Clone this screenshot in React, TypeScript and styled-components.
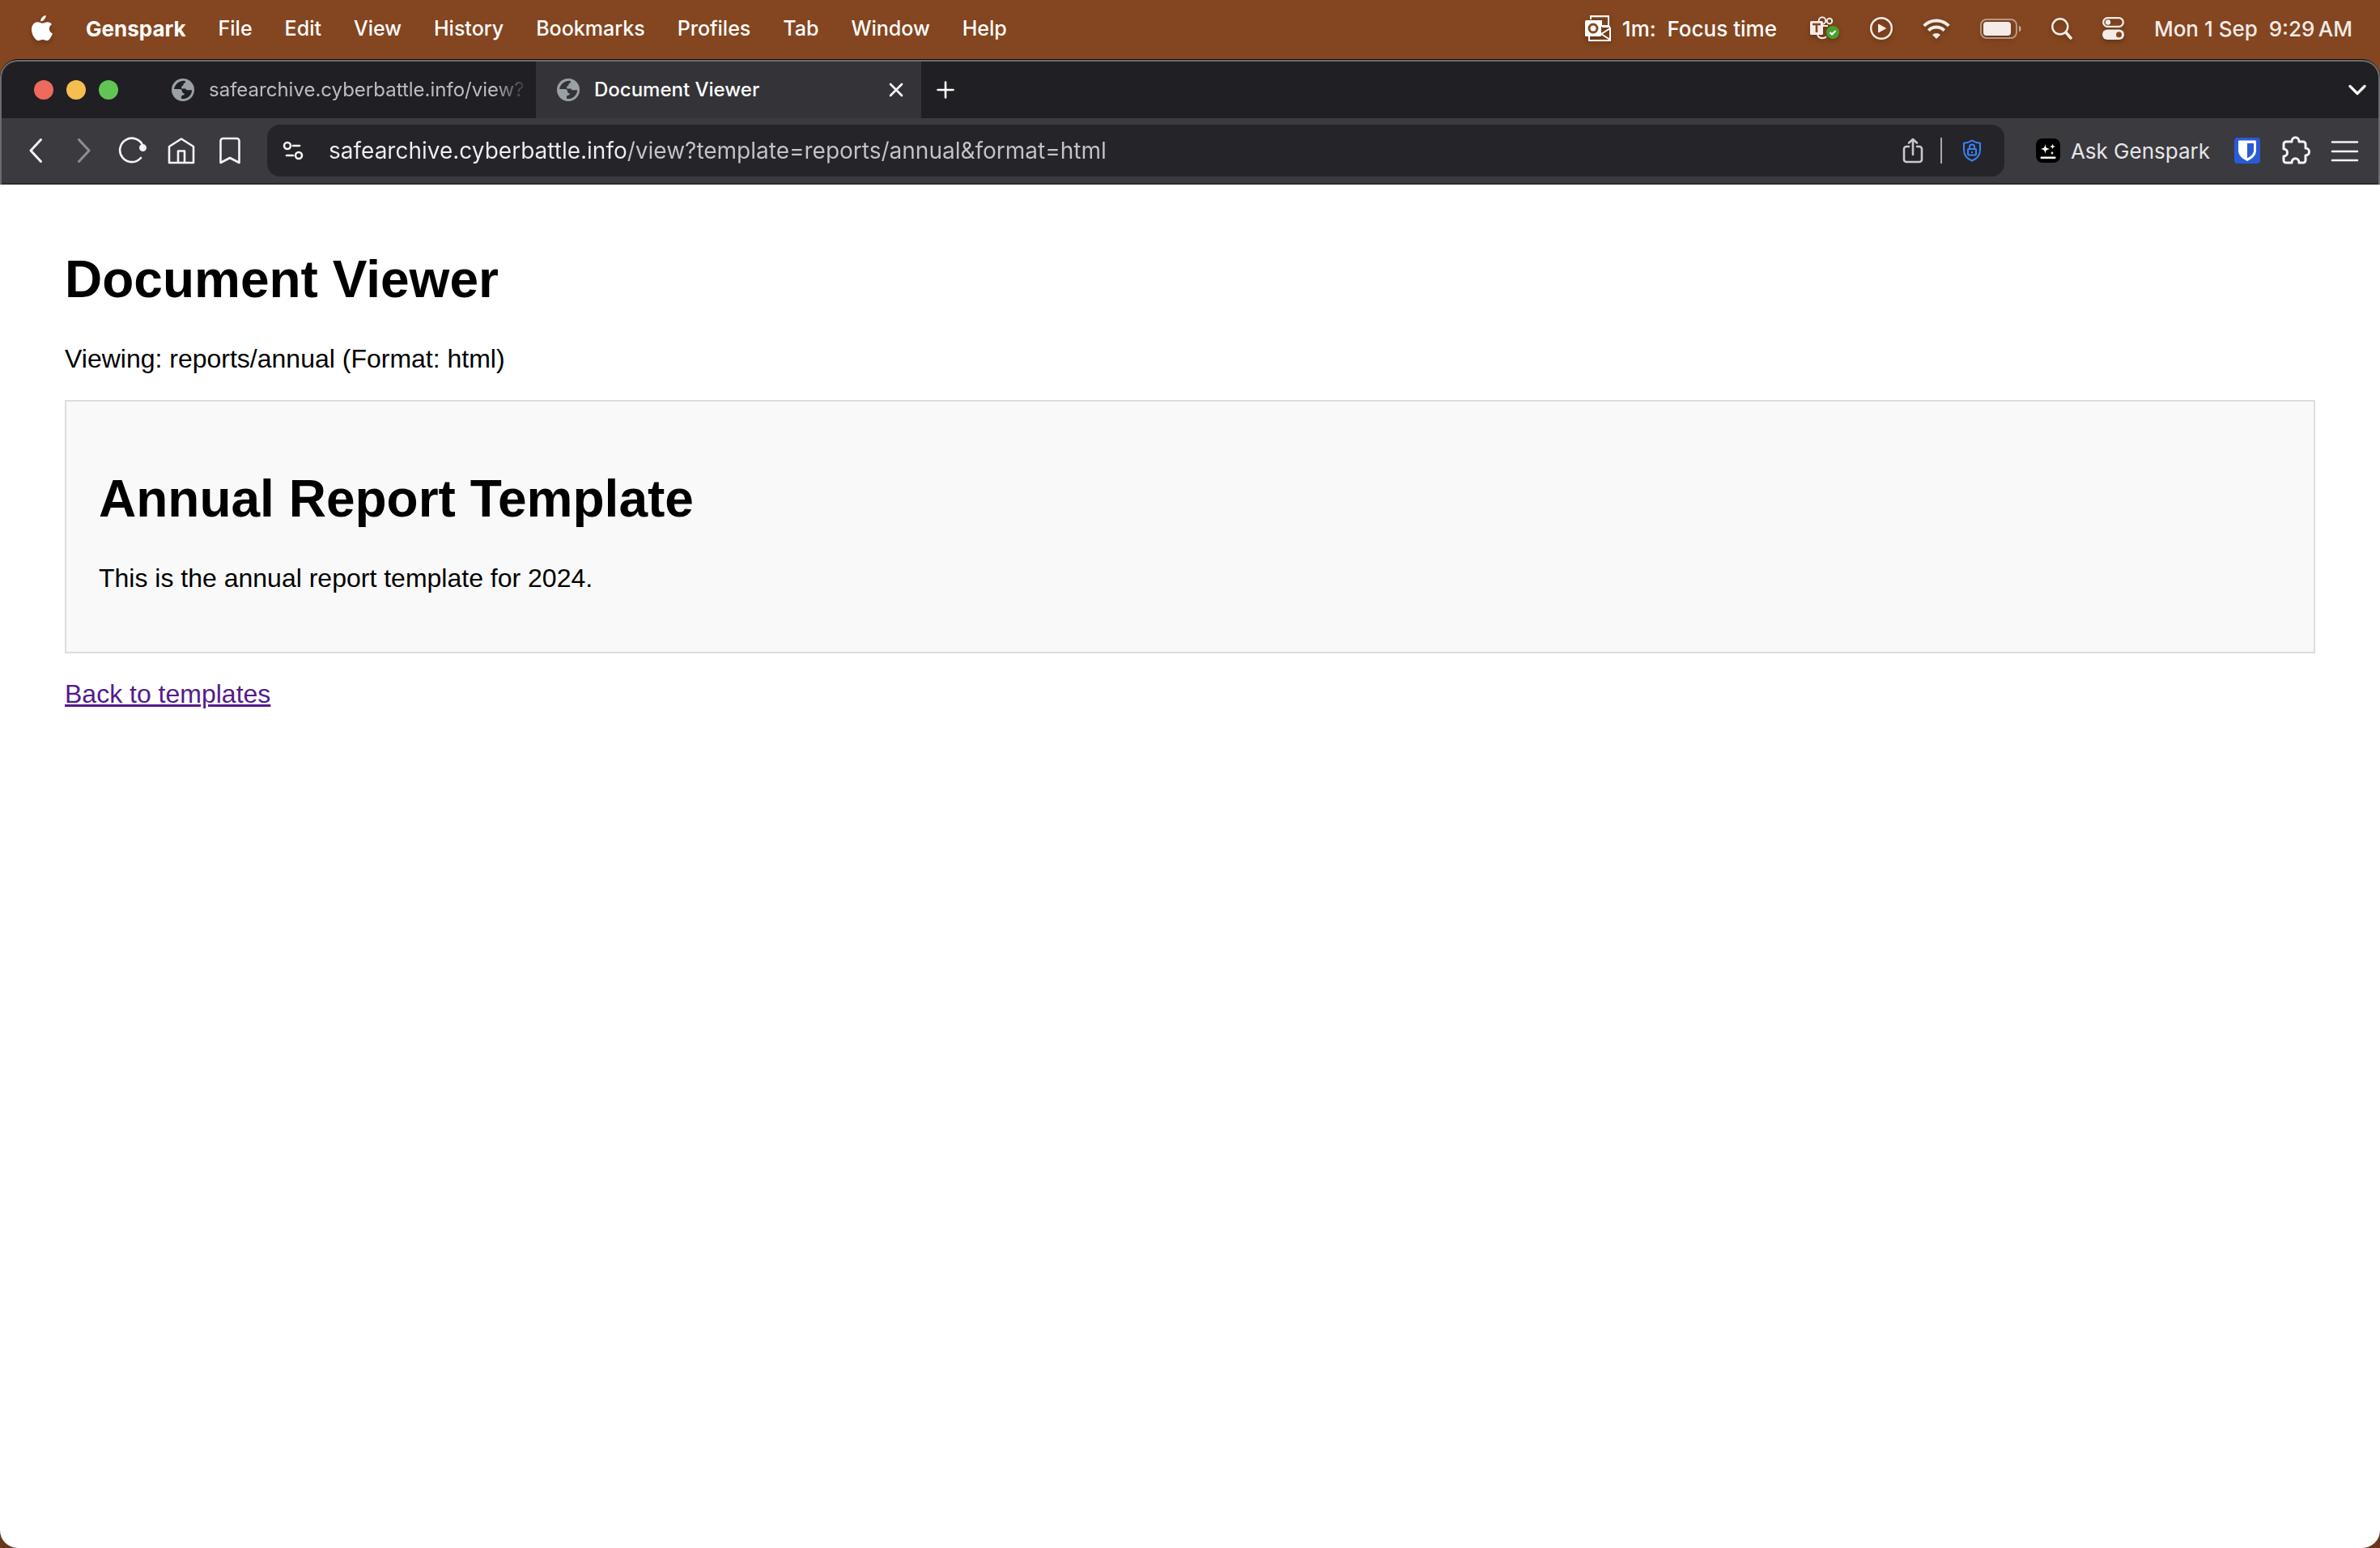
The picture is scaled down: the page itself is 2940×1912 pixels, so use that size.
import React from 'react';
import styled, { createGlobalStyle, css } from 'styled-components';

const ui = `Inter, "Liberation Sans", sans-serif`;

const Global = createGlobalStyle`
  * { box-sizing: border-box; }
  body { margin: 0; background: #6b3519; font-family: ${ui}; }
  button { padding: 0; border: 0; background: none; color: inherit; font: inherit; display: flex; align-items: center; }
  svg { display: block; flex: none; }
`;

const Desktop = styled.div`
  min-height: 100vh;
  display: flex;
  flex-direction: column;
  background: linear-gradient(#844620 120px, #6b3519 100%);
`;

const MenuBar = styled.header`
  height: 73px;
  display: flex;
  align-items: center;
  justify-content: space-between;
  padding: 0 34px 3px 38px;
  color: #fff;
  font-size: 25px;
  font-weight: 500;
  background: #844620;
  text-shadow: 0 3px 6px rgba(0, 0, 0, 0.35);
  svg { filter: drop-shadow(0 3px 3px rgba(0, 0, 0, 0.25)); }
`;

const Menus = styled.nav`
  display: flex;
  align-items: center;
  gap: 40px;
`;

const MenuItem = styled.button<{ $strong?: boolean }>`
  && {
    font-size: ${p => (p.$strong ? 26 : 25)}px;
    font-weight: ${p => (p.$strong ? 700 : 500)};
  }
`;

const Status = styled.div`
  display: flex;
  align-items: center;
  gap: 37px;
  font-size: 26px;
`;

const StatusButton = styled.button<{ $bright?: boolean }>`
  && {
    gap: 14px;
    margin-right: ${p => (p.$bright ? 4 : 0)}px;
    white-space: pre;
    color: ${p => (p.$bright ? '#fff' : '#f3ece8')};
  }
`;

const Window = styled.section`
  flex: 1;
  display: flex;
  flex-direction: column;
  border: 1px solid #0c0c0e;
  border-width: 1px 0 0;
  border-radius: 22px;
  overflow: hidden;
  background: #6b6c70;
`;

const Chrome = styled.div`
  margin: 2px 2px 0;
  border-radius: 20px 20px 0 0;
  overflow: hidden;
  background: #201f24;
`;

const TabStrip = styled.div`
  height: 70px;
  display: flex;
  align-items: stretch;
  color: #fff;
`;

const Lights = styled.div`
  display: flex;
  align-items: center;
  gap: 16px;
  padding: 0 54px 0 40px;
`;

const Light = styled.button<{ $color: string }>`
  && { width: 24px; height: 24px; border-radius: 50%; background: ${p => p.$color}; }
`;

const Tab = styled.div<{ $active?: boolean }>`
  width: ${p => (p.$active ? 476 : 462)}px;
  display: flex;
  align-items: center;
  gap: 18px;
  padding: 0 22px 0 26px;
  color: #fff;
  background: #343338;
  ${p => !p.$active && css`
    padding: 0 4px 0 12px;
    color: #bdbdbf;
    background: transparent;
  `}
`;

const TabTitle = styled.button<{ $fade?: boolean }>`
  && {
    flex: 1;
    min-width: 0;
    white-space: nowrap;
    font-size: 24px;
    font-weight: ${p => (p.$fade ? 400 : 500)};
    line-height: 32px;
    ${p => p.$fade && css`mask-image: linear-gradient(90deg, #000 88%, transparent 99%);`}
  }
`;

const NewTab = styled.button`
  && { padding: 0 19px; }
`;

const TabMenu = styled.button`
  && { margin-left: auto; padding: 0 15px; }
`;

const Toolbar = styled.div`
  height: 82px;
  display: flex;
  align-items: center;
  padding: 0 24px;
  color: #f4f4f6;
  background: #3b3a3f;
  border-bottom: 2px solid #2b2a2f;
`;

const NavButtons = styled.div`
  display: flex;
  gap: 24px;
  margin-right: 28px;
`;

const IconButton = styled.button<{ $dim?: boolean }>`
  && { width: 36px; height: 36px; justify-content: center; opacity: ${p => (p.$dim ? 0.45 : 1)}; }
`;

const AddressBar = styled.div`
  flex: 1;
  height: 64px;
  display: flex;
  align-items: center;
  padding: 0 24px 0 18px;
  border-radius: 16px;
  background: #252429;
`;

const Address = styled.input`
  flex: 1;
  min-width: 0;
  margin: 0 24px 0 30px;
  padding: 0;
  border: 0;
  outline: 0;
  font-family: ${ui};
  font-size: 28px;
  line-height: 36px;
  color: transparent;
  background: linear-gradient(90deg, #f0eff4 367px, #c4c4c9 367px);
  background-clip: text;
`;

const AddressActions = styled.div`
  display: flex;
  align-items: center;
  gap: 21px;
`;

const Divider = styled.span`
  width: 2px;
  height: 32px;
  background: #a9a9ab;
`;

const Ask = styled.button`
  && {
    gap: 12px;
    margin: 0 28px 0 38px;
    font-size: 26px;
    color: #e6e5ea;
    white-space: nowrap;
  }
`;

const Extensions = styled.div`
  display: flex;
  align-items: center;
  gap: 24px;
`;

const Page = styled.main`
  flex: 1;
  padding: 37px 80px 0;
  background: #fff;
  color: #000;
  font-family: "Liberation Sans", Arial, sans-serif;
  font-size: 32px;
  line-height: 38px;
`;

const Heading = styled.h1`
  margin: 42px 0 41px;
  font-size: 64px;
  line-height: 76px;
`;

const Text = styled.p`
  margin: 0 0 32px;
`;

const Report = styled.article`
  display: flow-root;
  margin-bottom: 31px;
  padding: 40px;
  padding-top: 40px;
  border: 2px solid #ddd;
  background: #f9f9f9;

  ${Heading} { margin-top: 42px; }
  ${Text} { margin-bottom: 32px; }
  padding-block: 40px;
`;

const BackLink = styled.a`
  color: #551a8b;
  text-decoration: underline;
`;

const Globe = ({ hole }: { hole: string }) => (
  <svg width="28" height="28" viewBox="0 0 28 28">
    <circle cx="14" cy="14" r="14" fill="#9aa0a6" />
    <path fill={hole} d="M15 2.800C10 3 4.500 6 3 13h6.500c2.500 0 3.500 1.200 3.500 3 0 1.500.8 2 2.500 2v2.200c-2 0-3.200.8-3.500 2.300-.2 1.200 0 2 .5 2.600C19 25.500 25 21 25.200 14.200h-5.700c-1.200 0-2-.8-2-1.800h-5.300V9.500c1.400 0 2.200-.8 2.300-2.200.1-1.300.9-1.900 2.300-1.900V3z" />
  </svg>
);

const line = { fill: 'none', stroke: 'currentColor', strokeWidth: 2.6, strokeLinecap: 'round', strokeLinejoin: 'round' } as const;

const Apple = () => (
  <svg width="28" height="32" viewBox="0 0 28 32" fill="#fff">
    <path d="M18.7 0c.2 3.900-3 7.300-6.400 7.300C11.900 3.700 15.100.4 18.700 0zM26 11c-4.600 2.900-3.900 9.500.9 11.500-1.200 3.500-4 8.800-7.100 8.800-2 0-2.800-1.200-5.100-1.200-2.400 0-3.300 1.200-5.200 1.200C5.900 31.300 1 23.900 1 17.500 1 11.500 4.900 8.300 8.600 8.300c2.500 0 4.200 1.400 5.800 1.400 1.500 0 3.600-1.500 6.400-1.500 1.700 0 4 .9 5.200 2.800z" />
  </svg>
);

export default function App() {
  return (
    <Desktop>
      <Global />
      <MenuBar>
        <Menus>
          <MenuItem aria-label="Apple menu"><Apple /></MenuItem>
          <MenuItem $strong>Genspark</MenuItem>
          {['File', 'Edit', 'View', 'History', 'Bookmarks', 'Profiles', 'Tab', 'Window', 'Help'].map(m => (
            <MenuItem key={m}>{m}</MenuItem>
          ))}
        </Menus>
        <Status>
          <StatusButton $bright>
            <svg width="32" height="32" viewBox="0 0 32 32">
              <path d="M7 5V1h22v13M5 26v5h26V15M31 16 20 23l11 7M21 14h10" fill="none" stroke="#fff" strokeWidth="2" />
              <path d="M7 1h22" stroke="#fff" strokeWidth="2.5" />
              <path d="M20 6v8M20 13h9" stroke="#fff" strokeWidth="2" />
              <rect x="0" y="6" width="20" height="20" rx="1.5" fill="#fff" />
              <circle cx="10" cy="16" r="5" fill="none" stroke="#844620" strokeWidth="3" />
            </svg>
            {'1m:  Focus time'}
          </StatusButton>
          <StatusButton aria-label="Teams">
            <svg width="37" height="30" viewBox="0 0 37 30">
              <g fill="none" stroke="#f3ece8" strokeWidth="2">
                <circle cx="15" cy="5.5" r="4.2" /><circle cx="24" cy="6" r="3.2" />
                <path d="M16 12h6M9 22c1 4 4 5.500 7 5 2 0 3-1 4-1.500" />
              </g>
              <rect x="0" y="6" width="16" height="17" rx="1.5" fill="#f3ece8" />
              <path d="M3 10h10M8 10v10" stroke="#844620" strokeWidth="2.6" />
              <circle cx="28" cy="20" r="8" fill="#4a9f2e" />
              <path d="m24.500 20 2.500 2.500 4.500-4.500" fill="none" stroke="#fff" strokeWidth="2" />
            </svg>
          </StatusButton>
          <StatusButton aria-label="Play">
            <svg width="28" height="28" viewBox="0 0 28 28">
              <circle cx="14" cy="14" r="12.8" fill="none" stroke="#f3ece8" strokeWidth="2.4" />
              <path d="M10.500 9v10l9-5z" fill="#f3ece8" stroke="#f3ece8" strokeLinejoin="round" />
            </svg>
          </StatusButton>
          <StatusButton aria-label="Wi-Fi">
            <svg width="34" height="25" viewBox="0 0 34 25">
              <path d="M1.700 8.800a21.800 21.800 0 0 1 30.600 0M7.300 14.600a13.800 13.800 0 0 1 19.400 0" fill="none" stroke="#f3ece8" strokeWidth="4" />
              <path d="m17 25-5-5a7.200 7.200 0 0 1 10 0z" fill="#f3ece8" />
            </svg>
          </StatusButton>
          <StatusButton aria-label="Battery">
            <svg width="51" height="25" viewBox="0 0 51 25">
              <rect x="1" y="1" width="44" height="23" rx="7" fill="none" stroke="#f3ece8" strokeOpacity=".5" strokeWidth="2" />
              <rect x="4" y="4" width="34" height="17" rx="4" fill="#f3ece8" />
              <path d="M48 8.500c3.500 1.500 3.500 6.500 0 8z" fill="#f3ece8" fillOpacity=".6" />
            </svg>
          </StatusButton>
          <StatusButton aria-label="Spotlight">
            <svg width="26" height="27" viewBox="0 0 26 27" fill="none" stroke="#f3ece8" strokeLinecap="round">
              <circle cx="10.8" cy="10.8" r="9.5" strokeWidth="2.5" />
              <path d="m18 18 6 7" strokeWidth="3.5" />
            </svg>
          </StatusButton>
          <StatusButton aria-label="Control Centre">
            <svg width="27" height="28" viewBox="0 0 27 28">
              <rect x="1.2" y="1.2" width="24.6" height="10.6" rx="5.3" fill="none" stroke="#f3ece8" strokeWidth="2.3" />
              <circle cx="7" cy="6.5" r="3.2" fill="#f3ece8" />
              <rect x="0" y="15.5" width="27" height="12.5" rx="6.2" fill="#f3ece8" />
              <circle cx="20.5" cy="21.7" r="3.5" fill="#844620" />
            </svg>
          </StatusButton>
          <StatusButton>{'Mon 1 Sep  9:29\u2009AM'}</StatusButton>
        </Status>
      </MenuBar>
      <Window>
        <Chrome>
          <TabStrip>
            <Lights>
              <Light $color="#ec6a5e" aria-label="Close window" />
              <Light $color="#f4bf4f" aria-label="Minimise window" />
              <Light $color="#61c554" aria-label="Zoom window" />
            </Lights>
            <Tab>
              <Globe hole="#201f24" />
              <TabTitle $fade>safearchive.cyberbattle.info/view?</TabTitle>
            </Tab>
            <Tab $active>
              <Globe hole="#343338" />
              <TabTitle>Document Viewer</TabTitle>
              <button aria-label="Close tab">
                <svg width="18" height="18" viewBox="0 0 18 18" {...line}><path d="m2 2 14 14M16 2 2 16" /></svg>
              </button>
            </Tab>
            <NewTab aria-label="New tab">
              <svg width="22" height="22" viewBox="0 0 22 22" {...line}><path d="M11 1.500v19M1.500 11h19" /></svg>
            </NewTab>
            <TabMenu aria-label="Search tabs">
              <svg width="22" height="14" viewBox="0 0 22 14" {...line} strokeWidth="3.2"><path d="m2 2.500 9 9 9-9" /></svg>
            </TabMenu>
          </TabStrip>
          <Toolbar>
            <NavButtons>
              <IconButton aria-label="Back">
                <svg width="36" height="36" viewBox="0 0 36 36" {...line} strokeWidth="3"><path d="M24.500 4.500 12 18l12.500 13.500" /></svg>
              </IconButton>
              <IconButton $dim aria-label="Forward">
                <svg width="36" height="36" viewBox="0 0 36 36" {...line} strokeWidth="3"><path d="M11.500 4.500 24 18 11.500 31.500" /></svg>
              </IconButton>
              <IconButton aria-label="Reload">
                <svg width="36" height="36" viewBox="0 0 36 36" {...line}>
                  <path d="M30.500 12A14.700 14.700 0 1 0 28 27" />
                  <circle cx="30.5" cy="14.5" r="3.2" fill="currentColor" />
                </svg>
              </IconButton>
              <IconButton aria-label="Home">
                <svg width="36" height="36" viewBox="0 0 36 36" {...line}>
                  <path d="M3 13 18 3.500 33 13v20H3zM14 33V18.500h8V33" />
                </svg>
              </IconButton>
              <IconButton aria-label="Bookmark">
                <svg width="36" height="36" viewBox="0 0 36 36" {...line}>
                  <path d="M6.500 33V6a3 3 0 0 1 3-3h17a3 3 0 0 1 3 3v27L18 27z" />
                </svg>
              </IconButton>
            </NavButtons>
            <AddressBar>
              <button aria-label="Site settings">
                <svg width="28" height="28" viewBox="0 0 28 28" {...line}>
                  <circle cx="7" cy="8" r="4" /><path d="M14 8h8" /><circle cx="21" cy="20" r="4" /><path d="M6 20h8" />
                </svg>
              </button>
              <Address
                type="text"
                aria-label="Address"
                defaultValue="safearchive.cyberbattle.info/view?template=reports/annual&format=html"
              />
              <AddressActions>
                <button aria-label="Share">
                  <svg width="26" height="32" viewBox="0 0 26 32" {...line} stroke="#c9c8cd">
                    <path d="M8 11H5a3 3 0 0 0-3 3v13a3 3 0 0 0 3 3h16a3 3 0 0 0 3-3V14a3 3 0 0 0-3-3h-3M13 21V2M8 6.500 13 2l5 4.500" />
                  </svg>
                </button>
                <Divider />
                <button aria-label="Shield">
                  <svg width="32" height="28" viewBox="0 0 32 28" fill="none" stroke="#3b82f6" strokeWidth="2" strokeLinejoin="round">
                    <path d="M16 1.500c3 2 6.500 3 10 3.300V13c0 6.500-3.500 11-10 13.500C9.500 24 6 19.500 6 13V4.800c3.500-.3 7-1.300 10-3.300z" />
                    <rect x="11" y="12" width="10" height="7.5" rx="1" />
                    <path d="M13 12V9.500a3 3 0 0 1 6 0V12M16 15v2" />
                  </svg>
                </button>
              </AddressActions>
            </AddressBar>
            <Ask>
              <svg width="32" height="32" viewBox="0 0 32 32">
                <rect x="1" y="1" width="30" height="30" rx="8" fill="#000" />
                <g fill="#fff">
                  <path d="M12.500 8c.8 4.500 1.500 5.200 6 6-4.500.8-5.200 1.500-6 6-.8-4.500-1.500-5.200-6-6 4.500-.8 5.200-1.500 6-6zM21.500 7.500c.4 2.500.9 3 3.500 3.500-2.600.5-3.100 1-3.500 3.500-.4-2.500-.9-3-3.500-3.500 2.600-.5 3.100-1 3.500-3.500zM21 16.500c.3 1.700.8 2.200 2.500 2.500-1.700.3-2.200.8-2.500 2.500-.3-1.700-.8-2.200-2.500-2.500 1.700-.3 2.200-.8 2.500-2.500z" />
                  <rect x="6.5" y="23.5" width="19" height="2.5" rx="1" />
                </g>
              </svg>
              Ask Genspark
            </Ask>
            <Extensions>
              <button aria-label="Password manager">
                <svg width="36" height="36" viewBox="0 0 36 36">
                  <rect x="2" y="2" width="32" height="32" rx="4" fill="#2a5bd7" />
                  <path d="M8 5.500h20a1 1 0 0 1 1 1V18c0 6-5 10-11 13C12 28 7 24 7 18V6.500a1 1 0 0 1 1-1z" fill="#fff" />
                  <path d="M18 9h8v9c0 4-3.500 7-8 9.500z" fill="#2a5bd7" />
                </svg>
              </button>
              <button aria-label="Extensions">
                <svg width="36" height="36" viewBox="0 0 36 36" {...line} strokeWidth="3">
                  <path d="M6 7h7c0-7 9-7 9 0h5a3 3 0 0 1 3 3v5c6 0 6 9 0 9v6a3 3 0 0 1-3 3h-5c0-7-9-7-9 0H6a3 3 0 0 1-3-3v-5c6 0 6-9 0-9v-6a3 3 0 0 1 3-3z" />
                </svg>
              </button>
              <button aria-label="Menu">
                <svg width="36" height="36" viewBox="0 0 36 36" {...line}><path d="M3 7.500h31M3 19h31M3 30h31" /></svg>
              </button>
            </Extensions>
          </Toolbar>
        </Chrome>
        <Page>
          <Heading>Document Viewer</Heading>
          <Text>Viewing: reports/annual (Format: html)</Text>
          <Report>
            <Heading>Annual Report Template</Heading>
            <Text>This is the annual report template for 2024.</Text>
          </Report>
          <BackLink href="#templates">Back to templates</BackLink>
        </Page>
      </Window>
    </Desktop>
  );
}
